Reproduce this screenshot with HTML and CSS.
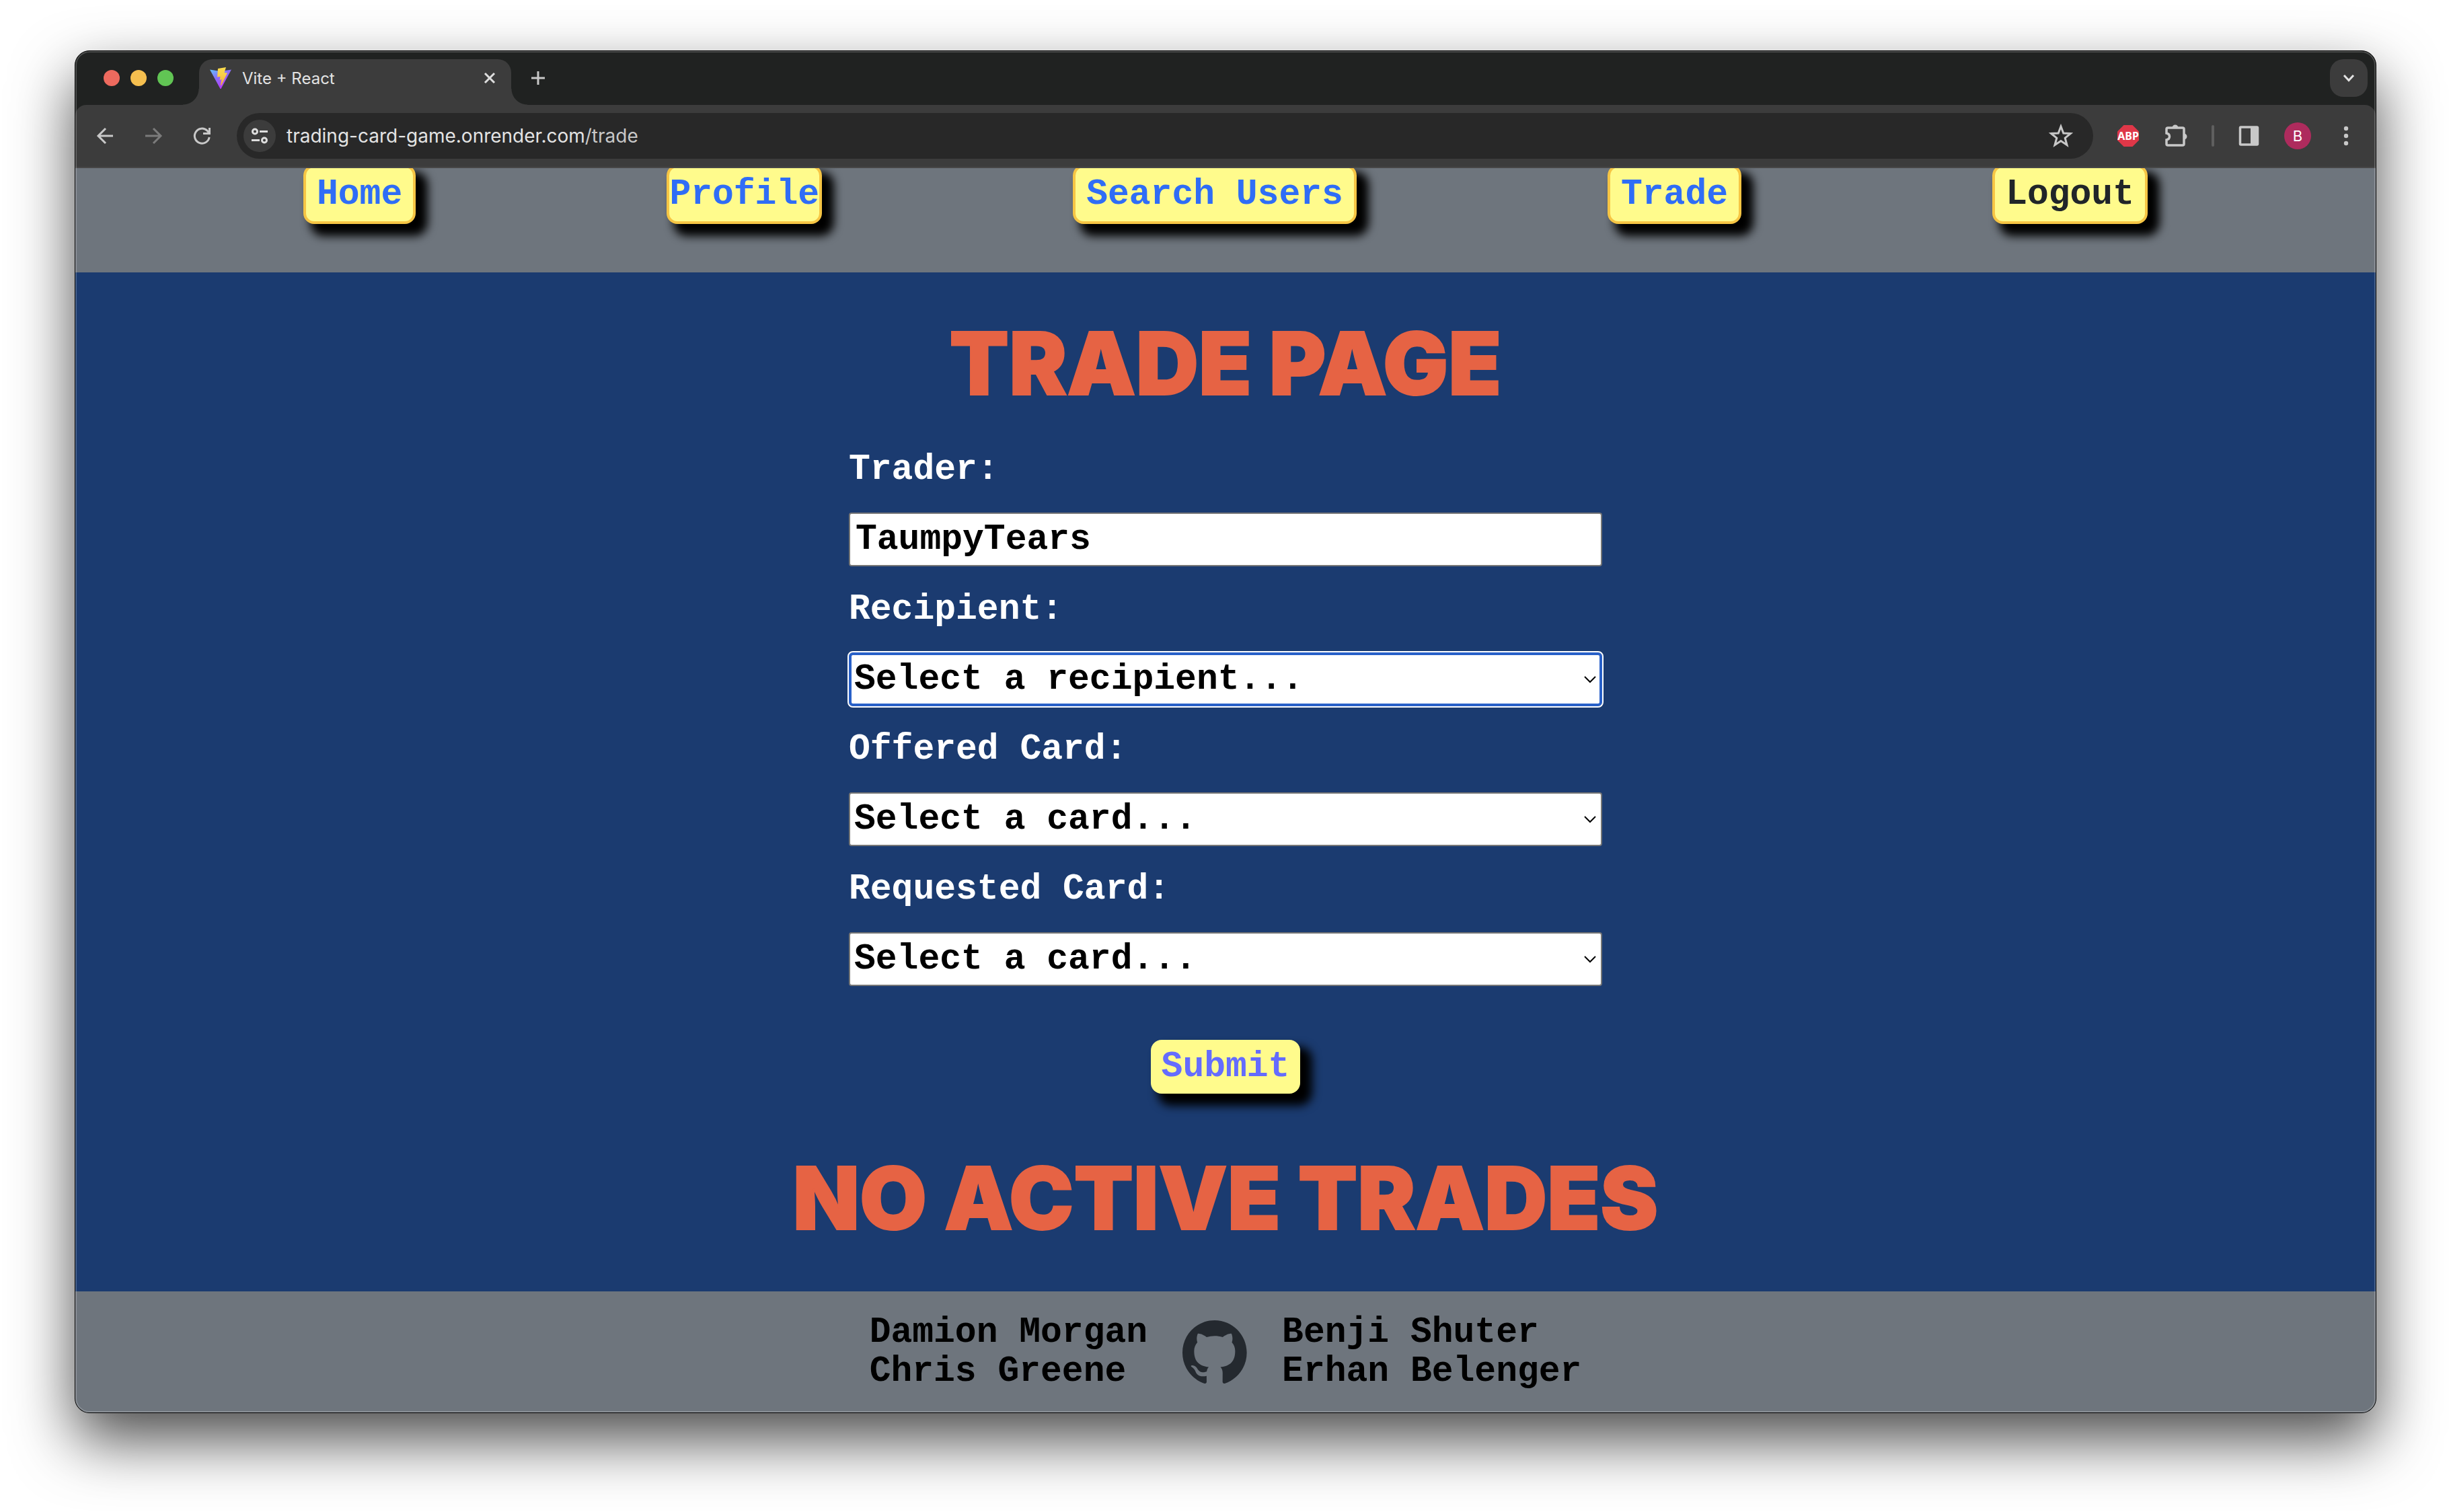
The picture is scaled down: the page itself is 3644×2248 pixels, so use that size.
FILE: index.html
```html
<!DOCTYPE html>
<html lang="en">
<head>
<meta charset="utf-8">
<title>Vite + React</title>
<link rel="stylesheet" href="styles.css">
</head>
<body>
<div class="window">
  <div class="tab-strip">
    <div class="lights"><span class="light light-close"></span><span class="light light-min"></span><span class="light light-max"></span></div>
    <div class="tab">
      <svg class="favicon" width="32" height="32" viewBox="0 0 32 32">
        <defs>
          <linearGradient id="v" x1="0" y1="0" x2=".6" y2="1"><stop offset="0" stop-color="#5fc4ff"/><stop offset=".45" stop-color="#8a70f8"/><stop offset="1" stop-color="#bd34fe"/></linearGradient>
          <linearGradient id="b" x1="0" y1="0" x2="0" y2="1"><stop offset="0" stop-color="#fbdc4c"/><stop offset=".4" stop-color="#f8cf4a"/><stop offset="1" stop-color="#f2a93b"/></linearGradient>
        </defs>
        <path fill="url(#v)" d="M0 3.500 16 6 32 3.500 16.500 32H15.500z"/>
        <path fill="url(#b)" d="M12 2 24 0 21.500 8 26 8.500 17 27 16 26.500 17.500 18 14.500 19 15.500 14 11 14.500z"/>
      </svg>
      <span class="tab-title">Vite + React</span>
      <button class="icon-button" aria-label="Close tab"><svg width="20" height="20" viewBox="0 0 20 20"><path d="M3 3 17 17M17 3 3 17" stroke="#dedede" stroke-width="3"/></svg></button>
    </div>
    <button class="icon-button new-tab" aria-label="New tab"><svg width="24" height="24" viewBox="0 0 24 24"><path d="M12 2V22M2 12H22" stroke="#c8c8c8" stroke-width="3"/></svg></button>
    <button class="icon-button tab-search" aria-label="Search tabs"><svg width="20" height="20" viewBox="0 0 20 20"><path d="M3 6 10 13.500 17 6" fill="none" stroke="#e3e3e3" stroke-width="3"/></svg></button>
  </div>

  <div class="toolbar">
    <div class="history">
      <button class="icon-button" aria-label="Back"><svg width="32" height="32" viewBox="0 0 32 32"><path d="M28 16H7M17 5 6 16 17 27" fill="none" stroke="#c8c8c8" stroke-width="3"/></svg></button>
      <button class="icon-button" aria-label="Forward"><svg width="32" height="32" viewBox="0 0 32 32"><path d="M4 16H26M16 5 27 16 16 27" fill="none" stroke="#7b7b7b" stroke-width="3"/></svg></button>
      <button class="icon-button" aria-label="Reload"><svg width="32" height="32" viewBox="0 0 32 32"><path d="M27.200 18A11 11 0 1 1 24 8.200L27 11.500" fill="none" stroke="#c8c8c8" stroke-width="3"/><path d="M29 4V14H18V11H26V4z" fill="#c8c8c8"/></svg></button>
    </div>
    <div class="address">
      <button class="icon-button site-info" aria-label="Site information"><svg width="24" height="24" viewBox="0 0 24 24" fill="none" stroke="#dedede" stroke-width="3"><circle cx="5" cy="5.500" r="3.500"/><path d="M12 5.500H24M0 18.500H12"/><circle cx="19" cy="18.500" r="3.500"/></svg></button>
      <span class="url">trading-card-game.onrender.com<span class="url-path">/trade</span></span>
      <button class="icon-button" aria-label="Bookmark"><svg width="36" height="36" viewBox="0 0 36 36"><path d="M18 4 21.800 14 32.500 14.500 24.200 21.200 27 31.500 18 25.600 9 31.500 11.800 21.200 3.500 14.500 14.200 14z" fill="none" stroke="#c8c8c8" stroke-width="3"/></svg></button>
    </div>
    <button class="icon-button abp" aria-label="Adblock Plus"><svg width="32" height="32" viewBox="0 0 32 32"><path d="M9.500 0H22.500L32 9.500V22.500L22.500 32H9.500L0 22.500V9.500z" fill="#df3748"/><text x="16" y="22" text-anchor="middle">ABP</text></svg></button>
    <button class="icon-button" aria-label="Extensions"><svg width="36" height="36" viewBox="0 0 36 36"><path d="M7 6H29Q31 6 31 8V30Q31 32 29 32H7Q5 32 5 30V24Q9.500 23 9.500 19T5 14V8Q5 6 7 6z" fill="none" stroke="#c8c8c8" stroke-width="3.500"/><path d="M13.500 6a4.500 4.500 0 0 1 9 0zM31 14.500a4.500 4.500 0 0 1 0 9z" fill="#c8c8c8"/></svg></button>
    <span class="divider"></span>
    <button class="icon-button" aria-label="Side panel"><svg width="32" height="32" viewBox="0 0 32 32"><rect x="2.500" y="3" width="26" height="26" rx="1" fill="none" stroke="#c8c8c8" stroke-width="3.500"/><path d="M18 3H29V29H18z" fill="#c8c8c8"/></svg></button>
    <button class="icon-button avatar" aria-label="Profile B">B</button>
    <button class="icon-button" aria-label="Menu"><svg width="32" height="32" viewBox="0 0 32 32" fill="#c8c8c8"><circle cx="16" cy="5" r="3.200"/><circle cx="16" cy="16" r="3.200"/><circle cx="16" cy="27" r="3.200"/></svg></button>
  </div>

  <div class="page">
    <nav class="nav">
      <a class="nav-link" href="#home">Home</a>
      <a class="nav-link nav-link-snug" href="#profile">Profile</a>
      <a class="nav-link" href="#users">Search Users</a>
      <a class="nav-link" href="#trade">Trade</a>
      <button class="nav-link nav-logout" type="button">Logout</button>
    </nav>

    <main class="main">
      <h1 class="title">TRADE PAGE</h1>
      <form class="form">
        <label class="label" for="trader">Trader:</label>
        <input class="control control-text" id="trader" type="text" value="TaumpyTears" readonly>
        <label class="label" for="recipient">Recipient:</label>
        <div class="picker">
          <select class="control control-active" id="recipient"><option>Select a recipient...</option></select>
          <svg class="chevron" width="20" height="12" viewBox="0 0 20 12"><path d="M2 2 10 10 18 2"/></svg>
        </div>
        <label class="label" for="offered">Offered Card:</label>
        <div class="picker">
          <select class="control" id="offered"><option>Select a card...</option></select>
          <svg class="chevron" width="20" height="12" viewBox="0 0 20 12"><path d="M2 2 10 10 18 2"/></svg>
        </div>
        <label class="label" for="requested">Requested Card:</label>
        <div class="picker">
          <select class="control" id="requested"><option>Select a card...</option></select>
          <svg class="chevron" width="20" height="12" viewBox="0 0 20 12"><path d="M2 2 10 10 18 2"/></svg>
        </div>
        <button class="submit" type="submit">Submit</button>
      </form>
      <h2 class="title">NO ACTIVE TRADES</h2>
    </main>

    <footer class="footer">
      <div class="names"><span>Damion Morgan</span><span>Chris Greene</span></div>
      <a class="github" href="#github" aria-label="GitHub"><svg width="96" height="96" viewBox="0 0 98 96"><path fill="#24292f" fill-rule="evenodd" clip-rule="evenodd" d="M48.854 0C21.839 0 0 22 0 49.217c0 21.756 13.993 40.172 33.405 46.690 2.427.49 3.316-1.059 3.316-2.362 0-1.141-.08-5.052-.08-9.127-13.590 2.934-16.420-5.867-16.420-5.867-2.184-5.704-5.420-7.170-5.420-7.170-4.448-3.015.324-3.015.324-3.015 4.934.326 7.523 5.052 7.523 5.052 4.367 7.496 11.404 5.378 14.235 4.074.404-3.178 1.699-5.378 3.074-6.600-10.839-1.141-22.243-5.378-22.243-24.283 0-5.378 1.940-9.778 5.014-13.200-.485-1.222-2.184-6.275.486-13.038 0 0 4.125-1.304 13.426 5.052a46.970 46.970 0 0 1 12.214-1.630c4.125 0 8.330.571 12.213 1.630 9.302-6.356 13.427-5.052 13.427-5.052 2.670 6.763.97 11.816.485 13.038 3.155 3.422 5.015 7.822 5.015 13.200 0 18.905-11.404 23.060-22.324 24.283 1.780 1.548 3.316 4.481 3.316 9.126 0 6.600-.08 11.897-.08 13.526 0 1.304.89 2.853 3.316 2.364 19.412-6.520 33.405-24.935 33.405-46.691C97.707 22 75.788 0 48.854 0z"/></svg></a>
      <div class="names"><span>Benji Shuter</span><span>Erhan Belenger</span></div>
    </footer>
  </div>
</div>
</body>
</html>
```
FILE: styles.css
```css
* { box-sizing: border-box; }

body {
  margin: 0;
  background: #fff;
  font-family: Inter, sans-serif;
}

button { font: inherit; }

.window {
  position: relative;
  margin: 75px 111px 146px;
  border: 1px solid #000;
  border-radius: 22px;
  overflow: hidden;
  background: #202221;
  box-shadow: 0 40px 90px rgba(0, 0, 0, .7);
}

/* light rim drawn inside the window edge */
.window::after {
  content: "";
  position: absolute;
  inset: 0;
  border: 2px solid rgba(255, 255, 255, .2);
  border-radius: 21px;
  pointer-events: none;
}

.icon-button {
  display: flex;
  align-items: center;
  justify-content: center;
  flex: none;
  padding: 0;
  border: 0;
  background: none;
}

/* tab strip */
.tab-strip {
  display: flex;
  align-items: center;
  height: 80px;
  padding: 12px 12px 12px 42px;
}

.lights { display: flex; gap: 16px; margin-right: 38px; }
.light { width: 24px; height: 24px; border-radius: 50%; }
.light-close { background: #ed6a5e; }
.light-min { background: #f5bf4f; }
.light-max { background: #61c554; }

.tab {
  position: relative;
  align-self: flex-start;
  display: flex;
  align-items: center;
  gap: 16px;
  width: 464px;
  height: 68px;
  padding: 0 22px 12px 16px;
  border-radius: 20px 20px 0 0;
  background: #3c3c3c;
}

/* flared feet of the tab */
.tab::before,
.tab::after {
  content: "";
  position: absolute;
  bottom: 0;
  width: 24px;
  height: 24px;
}
.tab::before { right: 100%; background: radial-gradient(circle at 0 0, transparent 23px, #3c3c3c 24px); }
.tab::after { left: 100%; background: radial-gradient(circle at 100% 0, transparent 23px, #3c3c3c 24px); }

.tab-title { flex: 1; color: #e3e3e3; font-size: 24px; }
.new-tab { margin-left: 28px; }
.tab-search { width: 56px; height: 56px; margin-left: auto; border-radius: 20px; background: #3c3c3c; }

/* toolbar */
.toolbar {
  display: flex;
  align-items: center;
  gap: 36px;
  padding: 12px 28px;
  border-bottom: 2px solid #474747;
  border-radius: 16px 16px 0 0;
  background: #3c3c3c;
}

.history { display: flex; gap: 40px; }

.address {
  flex: 1;
  display: flex;
  align-items: center;
  gap: 16px;
  height: 68px;
  padding: 0 30px 0 10px;
  border-radius: 34px;
  background: #282828;
}

.site-info { width: 48px; height: 48px; border-radius: 50%; background: #3c3c3c; }
.url { flex: 1; color: #e3e3e3; font-size: 28px; }
.url-path { color: #c7c7c7; }
.abp text { fill: #fff; font: bold 16px "Noto Sans", sans-serif; }
.divider { width: 4px; height: 32px; border-radius: 2px; background: #5f5f5f; }
.avatar { width: 40px; height: 40px; border-radius: 50%; background: #ae2b5d; color: #fff; font-size: 22px; }

/* page */
.page {
  overflow: hidden;
  font: bold 53px/60px "Liberation Mono", monospace;
}

/* the page is scrolled a little, so the bar starts above the viewport */
.nav {
  display: flex;
  justify-content: space-between;
  margin-top: -5px;
  padding: 0 339px 72px;
  background: #6e757d;
}

.nav-link,
.submit {
  border-radius: 16px;
  background: #fffb8c;
  box-shadow: 14px 14px 14px 4px #000;
  text-align: center;
  text-decoration: none;
}

.nav-link {
  padding: 10px 16px;
  border: 4px solid #f6c544;
  color: #2f6df6;
}
.nav-link-snug { padding: 10px 0; }
.nav-logout { color: #212529; }

.main {
  display: flex;
  flex-direction: column;
  align-items: center;
  padding: 75px 24px 79px;
  background: #1b3b70;
}

.title {
  margin: 0;
  color: #e66344;
  font: 900 129px/120px Inter, sans-serif;
  -webkit-text-stroke: 2px #e66344;
  text-align: center;
}

.form {
  display: flex;
  flex-direction: column;
  width: 100%;
  max-width: 1120px;
  margin: 34px 0 95px;
}

.label { color: #fff; line-height: 128px; }

.control {
  display: block;
  width: 100%;
  height: 80px;
  padding: 0 6px;
  border: 2px solid #767676;
  border-radius: 4px;
  background: #fff;
  color: #000;
  font: inherit;
  appearance: none;
}

.control-text { padding: 0 8px; }

.control-active {
  padding: 0 4px;
  border: 4px solid #2860c8;
  border-radius: 6px;
  outline: 2px solid #fff;
}

.picker { position: relative; }
.chevron {
  position: absolute;
  right: 8px;
  top: 34px;
  fill: none;
  stroke: #000;
  stroke-width: 2;
  pointer-events: none;
}

.submit {
  align-self: center;
  margin-top: 80px;
  padding: 10px 16px;
  border: 0;
  color: #646cff;
}

.footer {
  display: flex;
  align-items: center;
  justify-content: center;
  gap: 52px;
  padding: 32px;
  background: #6e757d;
  color: #000;
}

.names { display: flex; flex-direction: column; line-height: 58px; }
.github { display: flex; }
```
